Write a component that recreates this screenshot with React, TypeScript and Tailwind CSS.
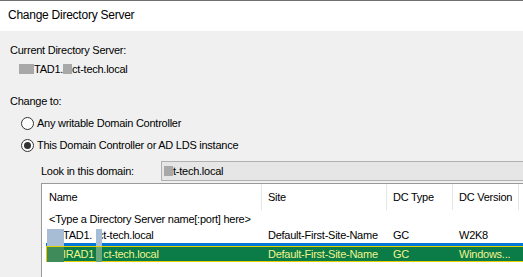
import React from "react";

const Gray = ({ w, h }: { w: number; h: number }) => (
  <span className="inline-block bg-[#a8a8a8] shrink-0" style={{ width: w, height: h }} />
);

function Radio({ checked, label }: { checked?: boolean; label: string }) {
  return (
    <div className="flex items-center h-[16px] ml-[11px] gap-[3px]">
      <span className="w-[13px] h-[13px] rounded-full border border-[#333333] bg-white flex items-center justify-center">
        {checked && <span className="w-[7px] h-[7px] rounded-full bg-[#333333]" />}
      </span>
      <span>{label}</span>
    </div>
  );
}

export default function App() {
  return (
    <div
      className="w-[523px] h-[277px] overflow-hidden bg-[#f0f0f0] flex flex-col text-black text-[11px] tracking-[-0.25px] whitespace-nowrap"
      style={{ fontFamily: '"Liberation Sans", Arial, sans-serif' }}
    >
      <div className="h-[1px] bg-[#707070] shrink-0" />
      <div className="h-[30px] bg-white flex items-center pl-[8px] pb-[2px] text-[12px] tracking-[-0.25px] shrink-0">
        Change Directory Server
      </div>
      <div className="flex flex-col pl-[10px] leading-[16px] flex-1 min-h-0">
        <div className="mt-[11px] h-[16px]">Current Directory Server:</div>
        <div className="mt-[3px] h-[16px] flex items-center ml-[9px]">
          <Gray w={15} h={10} />
          <span>TAD1.</span>
          <Gray w={9} h={10} />
          <span>ct-tech.local</span>
        </div>
        <div className="mt-[16px] h-[16px]">Change to:</div>
        <div className="mt-[6px]">
          <Radio label="Any writable Domain Controller" />
        </div>
        <div className="mt-[6px]">
          <Radio checked label="This Domain Controller or AD LDS instance" />
        </div>
        <div className="mt-[8px] flex items-center h-[20px] ml-[31px] shrink-0">
          <span className="w-[120px] shrink-0">Look in this domain:</span>
          <div className="w-[400px] h-[20px] border border-[#b0b0b0] bg-[#e6e6e6] flex items-center pl-[2px] shrink-0">
            <Gray w={9} h={10} />
            <span>t-tech.local</span>
          </div>
        </div>
        <div className="mt-[2px] ml-[31px] w-[560px] flex-1 shrink-0 border-l border-t border-[#9a9a9a] bg-white relative">
          {/* header */}
          <div className="flex h-[26px]">
            <div className="w-[220px] shrink-0 border-r border-[#e5e5e5] pl-[7px] flex items-center">Name</div>
            <div className="w-[125px] shrink-0 border-r border-[#e5e5e5] pl-[6px] flex items-center">Site</div>
            <div className="w-[66px] shrink-0 border-r border-[#e5e5e5] pl-[6px] flex items-center">DC Type</div>
            <div className="w-[66px] shrink-0 border-r border-[#e5e5e5] pl-[6px] flex items-center">DC Version</div>
          </div>
          <div className="flex h-[17px] items-center ml-[4px]">
            <div className="pl-[3px]">&lt;Type a Directory Server name[:port] here&gt;</div>
          </div>
          <div className="flex h-[16px] items-center ml-[4px]">
            <div className="w-[216px] shrink-0 pl-[17px] flex items-center">
              <span>TAD1.</span>
              <span className="inline-block w-[6px]" />
              <span>ct-tech.local</span>
            </div>
            <div className="w-[125px] shrink-0 pl-[6px]">Default-First-Site-Name</div>
            <div className="w-[66px] shrink-0 pl-[6px]">GC</div>
            <div className="w-[66px] shrink-0 pl-[6px]">W2K8</div>
          </div>
          <div className="h-[3px] ml-[4px] bg-[#0078d7]" />
          <div className="flex h-[16px] items-center ml-[4px] bg-[#0b7b48] text-[#f3f38c] shadow-[inset_0_0_0_1px_#e8d000]">
            <div className="w-[216px] shrink-0 pl-[17px] flex items-center">
              <span>IRAD1</span>
              <span className="inline-block w-[9px]" />
              <span>ct-tech.local</span>
            </div>
            <div className="w-[125px] shrink-0 pl-[6px]">Default-First-Site-Name</div>
            <div className="w-[66px] shrink-0 pl-[6px]">GC</div>
            <div className="w-[66px] shrink-0 pl-[6px]">Windows...</div>
          </div>
          {/* redaction overlays */}
          <div className="absolute left-[5px] top-[45px] w-[17px] h-[17px] bg-[#a7bdd5]" />
          <div className="absolute left-[5px] top-[63px] w-[17px] h-[15px] bg-[#3f8c5a]" />
          <div className="absolute left-[54px] top-[45px] w-[6px] h-[17px] bg-[#a5bdd6]" />
          <div className="absolute left-[54px] top-[63px] w-[6px] h-[15px] bg-[#6aa67c]" />
        </div>
      </div>
    </div>
  );
}
